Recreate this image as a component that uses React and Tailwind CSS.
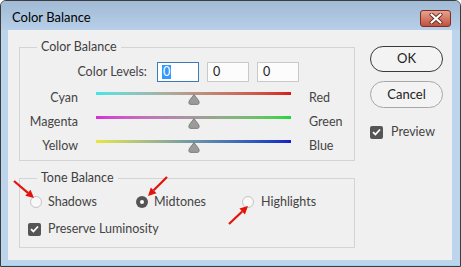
import React from "react";

const font = "font-['Lato',sans-serif]";

const Legend = ({ children }) => (
	<span className="absolute -top-[9px] left-[17px] px-[4px] bg-[#f0f0f0] leading-[16px] text-[#404040]">
		{children}
	</span>
);

const Thumb = () => (
	<svg className="absolute left-1/2 -translate-x-1/2 top-[2px]" width="12" height="11" viewBox="0 0 12 11">
		<path d="M6 0.6 L10.4 6.2 Q11.6 8 10.9 9.6 Q10.6 10.4 9.6 10.4 H2.4 Q1.4 10.4 1.1 9.6 Q0.4 8 1.6 6.2 Z" fill="#9b9b9b" stroke="#707070" strokeWidth="0.8" />
	</svg>
);

const SliderRow = ({ left, right, track }) => (
	<div className="flex items-center h-[24px]">
		<span className="w-[58px] text-right">{left}</span>
		<div className="relative ml-[18px] w-[195px] h-[13px]">
			<div className={"h-[3px] w-full " + track} />
			<Thumb />
		</div>
		<span className="ml-[18px]">{right}</span>
	</div>
);

const Radio = ({ checked }) =>
	checked ? (
		<span className="flex items-center justify-center w-[12px] h-[12px] rounded-full bg-[#555555]">
			<span className="w-[4px] h-[4px] rounded-full bg-white" />
		</span>
	) : (
		<span className="w-[12px] h-[12px] rounded-full border border-[#c4c4c4] bg-[#f8f8f8]" />
	);

const Check = () => (
	<span className="flex items-center justify-center w-[13px] h-[13px] rounded-[2px] bg-[#555555]">
		<svg width="9" height="8" viewBox="0 0 9 8">
			<path d="M1 4.2 L3.4 6.5 L8 1.5" fill="none" stroke="white" strokeWidth="1.8" />
		</svg>
	</span>
);

const arrows = [
	[13, 180, 33, 197],
	[166, 176, 147, 195],
	[228, 223, 247, 205],
];

const Arrow = ({ a }) => {
	const [x1, y1, x2, y2] = a;
	const dx = x2 - x1;
	const dy = y2 - y1;
	const len = Math.hypot(dx, dy);
	const ux = dx / len;
	const uy = dy / len;
	const bx = x2 - ux * 8;
	const by = y2 - uy * 8;
	const pts = `${x2},${y2} ${bx - uy * 4},${by + ux * 4} ${bx + uy * 4},${by - ux * 4}`;
	return (
		<g>
			<line x1={x1} y1={y1} x2={bx} y2={by} stroke="#e3120b" strokeWidth="2.2" />
			<polygon points={pts} fill="#e3120b" />
		</g>
	);
};

export default function App() {
	return (
		<div className={"relative w-[461px] h-[267px] flex flex-col bg-[#bcd4ec] border border-[#3c3c3c] rounded-t-[6px] overflow-hidden text-[12.5px] text-[#444444] " + font}>
			<div className="flex items-center h-[29px] pt-[5px] pl-[11px] pr-[9px] bg-linear-to-b from-[#a1bad5] to-[#b7cfe8]">
				<span className="text-[13px] text-black">Color Balance</span>
				<div className="ml-auto flex items-center justify-center w-[31px] h-[17px] rounded-[3px] border border-[#7d2e25] bg-linear-to-b from-[#e6a391] to-[#c0503b]">
					<svg width="14" height="11" viewBox="0 0 14 11">
						<path d="M2.5 1.5 L11.5 9.5 M11.5 1.5 L2.5 9.5" stroke="#6a2a22" strokeWidth="4" strokeLinecap="round" />
						<path d="M2.5 1.5 L11.5 9.5 M11.5 1.5 L2.5 9.5" stroke="white" strokeWidth="2.2" strokeLinecap="round" />
					</svg>
				</div>
			</div>

			<div className="flex ml-[7px] mr-[8px] h-[230px] bg-[#f0f0f0]">
				<div className="flex flex-col ml-[11px] w-[336px]">
					<div className="relative mt-[17px] h-[114px] border border-[#d4d4d4] pt-[14px]">
						<Legend>Color Balance</Legend>
						<div className="flex items-center h-[20px]">
							<span className="w-[127px] text-right">Color Levels:</span>
							<div className="ml-[10px] flex gap-[8px]">
								<div className="flex items-center w-[42px] h-[20px] pl-[4px] bg-white border border-[#3d7ab8]">
									<span className="bg-[#3399ff] text-white leading-[14px] px-[1px]">0</span>
								</div>
								<div className="flex items-center w-[42px] h-[20px] pl-[5px] bg-[#fcfcfc] border border-[#c9c9c9] text-[#222]">0</div>
								<div className="flex items-center w-[42px] h-[20px] pl-[5px] bg-[#fcfcfc] border border-[#c9c9c9] text-[#222]">0</div>
							</div>
						</div>
						<div className="mt-[4px]">
							<SliderRow left="Cyan" right="Red" track="bg-linear-to-r from-[#3ce6e6] to-[#d41a1a]" />
							<SliderRow left="Magenta" right="Green" track="bg-linear-to-r from-[#d52ed5] to-[#1fd43e]" />
							<SliderRow left="Yellow" right="Blue" track="bg-linear-to-r from-[#e8e634] to-[#1c1cc6]" />
						</div>
					</div>

					<div className="relative mt-[17px] h-[70px] border border-[#d4d4d4] pt-[15px]">
						<Legend>Tone Balance</Legend>
						<div className="flex items-center h-[16px] pl-[10px]">
							<div className="flex items-center gap-[6px] w-[106px]">
								<Radio />
								<span>Shadows</span>
							</div>
							<div className="flex items-center gap-[6px] w-[106px]">
								<Radio checked />
								<span>Midtones</span>
							</div>
							<div className="flex items-center gap-[7px]">
								<Radio />
								<span>Highlights</span>
							</div>
						</div>
						<div className="flex items-center gap-[7px] h-[16px] mt-[11px] pl-[8px]">
							<Check />
							<span>Preserve Luminosity</span>
						</div>
					</div>
				</div>

				<div className="flex flex-col ml-[15px] w-[73px]">
					<button className="mt-[16px] h-[26px] rounded-full border border-[#3a3a3a] bg-[#f3f3f3] text-[13px] text-[#222]">OK</button>
					<button className="mt-[9px] h-[27px] rounded-full border border-[#a8a8a8] bg-[#f3f3f3] text-[13px] text-[#222]">Cancel</button>
					<div className="flex items-center gap-[8px] mt-[16px] h-[16px]">
						<Check />
						<span>Preview</span>
					</div>
				</div>
			</div>
			<div className="mt-auto h-[1px] bg-[#8fdcef]" />

			<svg className="absolute left-0 top-0 pointer-events-none" width="461" height="267">
				{arrows.map((a, i) => (
					<Arrow key={i} a={a} />
				))}
			</svg>
		</div>
	);
}
